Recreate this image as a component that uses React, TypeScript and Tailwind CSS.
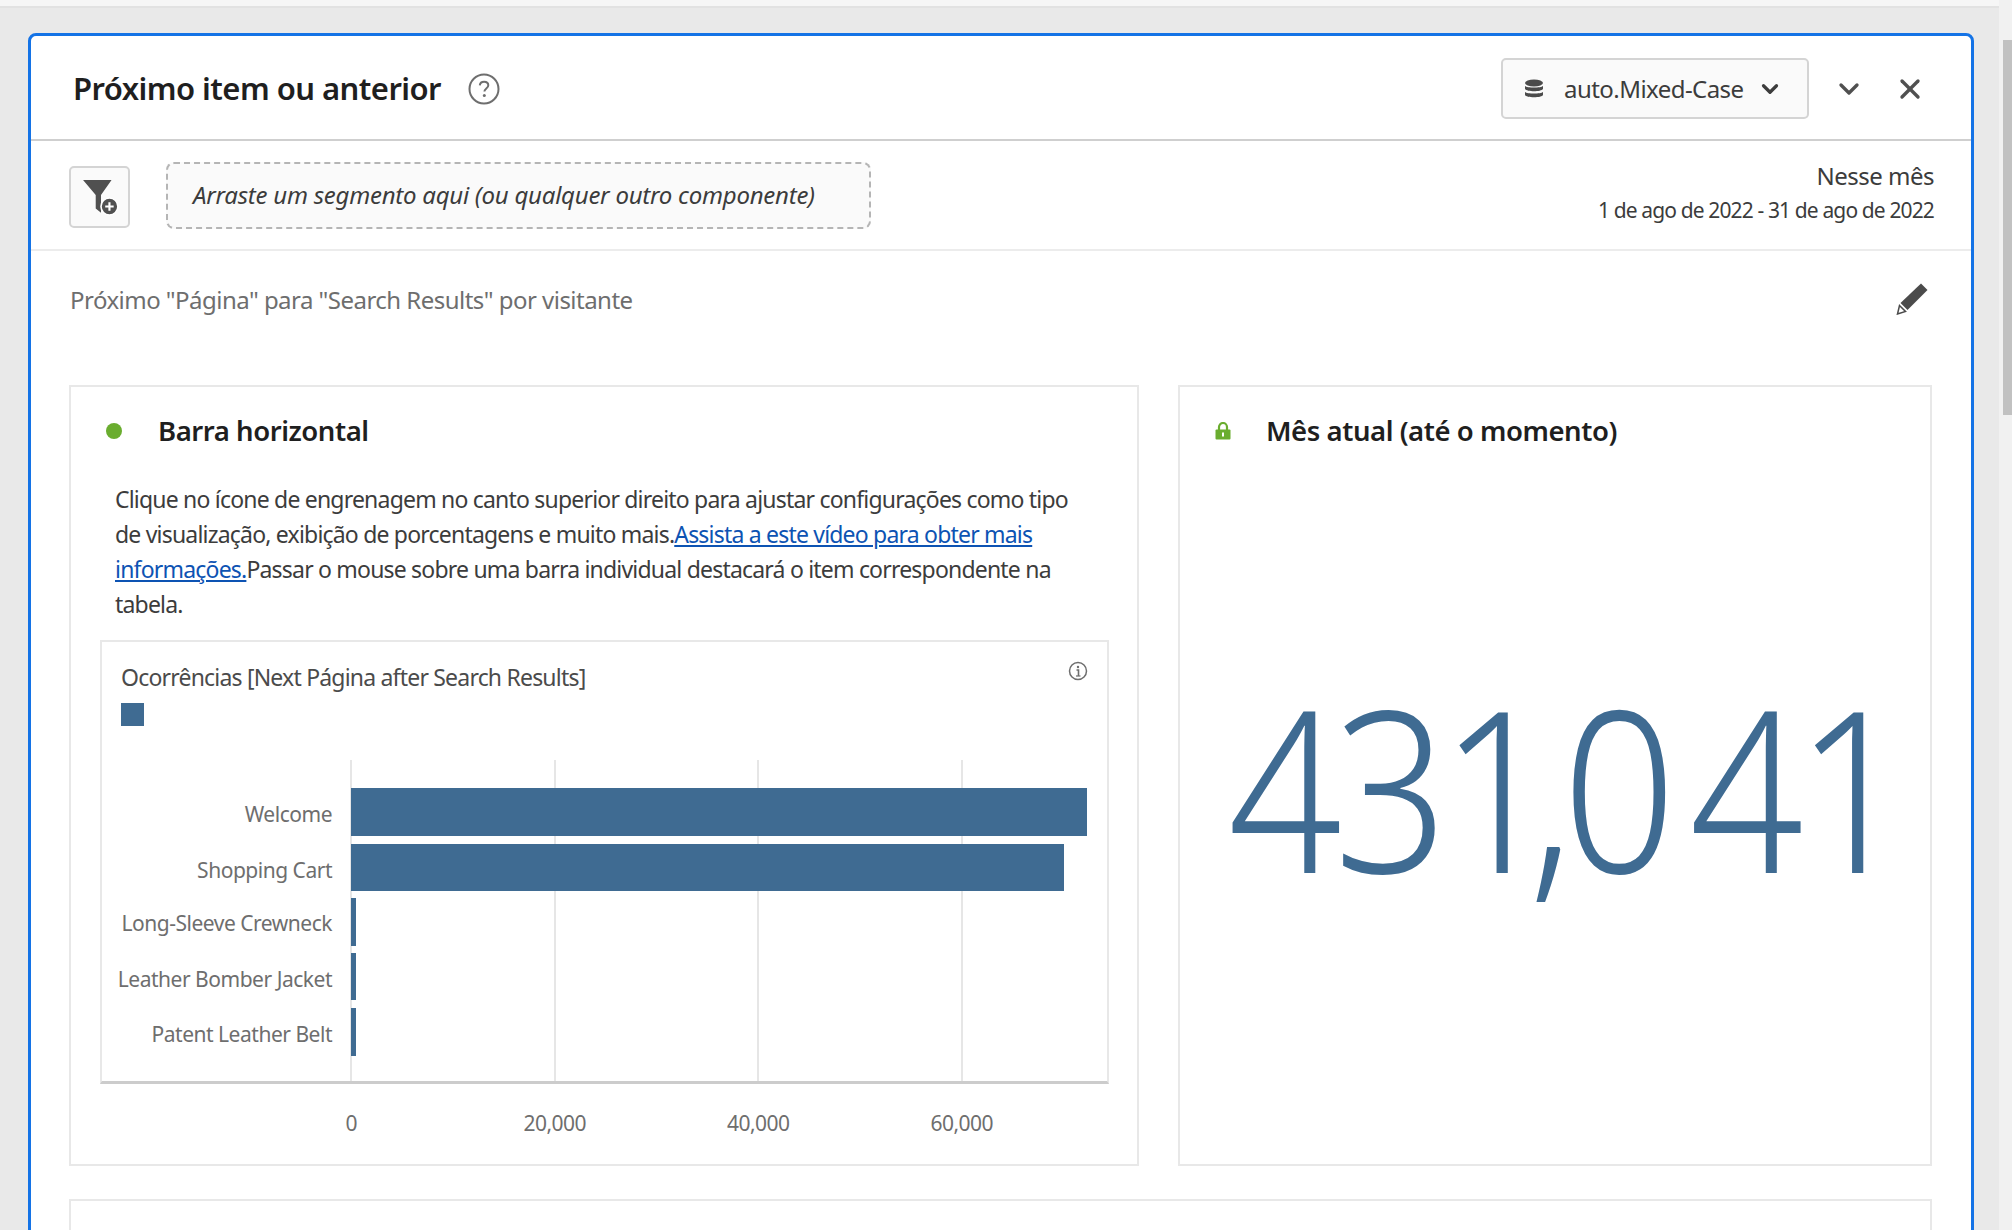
import { ChevronDown, X } from "lucide-react";

const bars = [
  { label: "Welcome", y: 28, h: 48, w: 736, ty: 54 },
  { label: "Shopping Cart", y: 84, h: 47, w: 713, ty: 110 },
  { label: "Long-Sleeve Crewneck", y: 138, h: 48, w: 5, ty: 163 },
  { label: "Leather Bomber Jacket", y: 193, h: 47, w: 5, ty: 219 },
  { label: "Patent Leather Belt", y: 248, h: 48, w: 5, ty: 274 },
];

const gridX = [249, 453, 656, 860];
const ticks = ["0", "20,000", "40,000", "60,000"];

const FilterAdd = () => (
  <svg width="38" height="38" viewBox="0 0 36 36">
    <path d="M1 2h27L18 16v17l-5-4V16z" fill="#505050" />
    <circle cx="26" cy="27" r="8" fill="#505050" stroke="#fff" strokeWidth="1.5" />
    <path d="M26 23v8M22 27h8" stroke="#fff" strokeWidth="2" />
  </svg>
);

const DbIcon = () => (
  <svg width="20" height="20" viewBox="0 0 20 20" fill="#4b4b4b">
    <ellipse cx="10" cy="4" rx="9" ry="3.5" />
    <path d="M1 7c2 2 16 2 18 0v3c-2 3-16 3-18 0z" />
    <path d="M1 13c2 2 16 2 18 0v3c-1 3-17 3-18 0z" />
  </svg>
);

const Pencil = () => (
  <svg width="32" height="32" viewBox="0 0 32 32" fill="#4b4b4b">
    <path d="M25 .5L31.500 7 11.500 27 4.500 20z" />
    <path d="M3.500 22.500l6 6L1.500 31z" fill="none" stroke="#4b4b4b" strokeWidth="1.5" />
  </svg>
);

const LockIcon = () => (
  <svg width="16" height="18" viewBox="0 0 16 18">
    <path d="M4 8V5a4 4 0 0 1 8 0v3" fill="none" stroke="#6aad2f" strokeWidth="2.2" />
    <rect x="0.5" y="7.5" width="15" height="10" rx="1" fill="#6aad2f" />
    <rect x="7" y="10.5" width="2" height="4" fill="#fff" />
  </svg>
);

const HelpIcon = () => (
  <svg width="32" height="32" viewBox="0 0 32 32" fill="none">
    <circle cx="16" cy="16" r="14.5" stroke="#6e6e6e" strokeWidth="2" />
    <path d="M11.800 12.400c.3-2.400 2-3.600 4.300-3.600 2.500 0 4.200 1.400 4.200 3.500 0 3.200-3.900 3.200-3.900 6.300" stroke="#6e6e6e" strokeWidth="2" />
    <circle cx="16.300" cy="22.600" r="1.500" fill="#6e6e6e" />
  </svg>
);

const InfoIcon = () => (
  <svg width="20" height="20" viewBox="0 0 20 20" fill="none">
    <circle cx="10" cy="10" r="8.500" stroke="#6e6e6e" strokeWidth="1.500" />
    <circle cx="10" cy="6" r="1.200" fill="#6e6e6e" />
    <path d="M8.500 9h2v6" stroke="#6e6e6e" strokeWidth="1.600" />
    <path d="M8 15h4.500" stroke="#6e6e6e" strokeWidth="1.200" />
  </svg>
);

const App = () => {
  return (
    <div className="flex h-[1230px] w-full overflow-hidden bg-[#e9e9e9] font-['Noto_Sans',sans-serif] text-[#2c2c2c]">
      <div className="flex min-w-0 flex-1 flex-col">
        <div className="h-[8px] shrink-0 border-b-2 border-[#e2e2e2] bg-[#f6f6f6]" />
        <div className="min-h-0 flex-1 pl-[28px] pr-[25px] pt-[25px]">
          {/* panel */}
          <div className="flex h-[1300px] w-[1946px] flex-col rounded-t-[8px] border-[3px] border-[#1473e6] bg-white">
            {/* header */}
            <div className="flex h-[105px] shrink-0 items-center border-b-2 border-[#cfcfcf] pl-[42px] pr-[45px] pt-[2px]">
              <h1 className="text-[31px] font-semibold tracking-[-0.55px] text-[#1f1f1f]">Próximo item ou anterior</h1>
              <span className="ml-[27px] flex"><HelpIcon /></span>
              <div className="ml-auto flex h-[61px] w-[308px] items-center rounded-[5px] border-2 border-[#d4d4d4] bg-[#fafafa] pl-[21px]">
                <DbIcon />
                <span className="ml-[20px] text-[24px] tracking-[-0.55px] text-[#3c3c3c]">auto.Mixed-Case</span>
                <ChevronDown size={26} strokeWidth={3} className="ml-[13px] text-[#3c3c3c]" />
              </div>
              <ChevronDown size={32} strokeWidth={2.5} className="ml-[24px] text-[#505050]" />
              <X size={32} strokeWidth={2.5} className="ml-[29px] text-[#505050]" />
            </div>
            {/* toolbar */}
            <div className="flex h-[110px] shrink-0 items-center border-b-2 border-[#ececec] pl-[38px] pr-[37px]">
              <div className="mt-[3px] flex h-[62px] w-[61px] items-center justify-center rounded-[5px] border-2 border-[#d4d4d4] bg-[#fafafa] pl-[2px]">
                <FilterAdd />
              </div>
              <div className="ml-[36px] flex h-[67px] w-[705px] items-center rounded-[8px] border-2 border-dashed border-[#b5b5b5] bg-[#fafafa] pl-[25px]">
                <span className="text-[24px] italic tracking-[-0.25px] text-[#3c3c3c]">Arraste um segmento aqui (ou qualquer outro componente)</span>
              </div>
              <div className="ml-auto pb-[5px] text-right">
                <div className="text-[24px] leading-[34px] tracking-[-0.5px] text-[#3c3c3c]">Nesse mês</div>
                <div className="text-[21px] leading-[34px] tracking-[-0.87px] text-[#3c3c3c]">1 de ago de 2022 - 31 de ago de 2022</div>
              </div>
            </div>
            {/* subtitle */}
            <div className="flex h-[134px] shrink-0 items-start pl-[39px] pr-[43px] pt-[31px]">
              <span className="text-[24px] leading-[36px] tracking-[-0.53px] text-[#6e6e6e]">Próximo "Página" para "Search Results" por visitante</span>
              <span className="ml-auto flex pt-[1px]"><Pencil /></span>
            </div>
            {/* cards */}
            <div className="flex shrink-0 gap-[39px] pl-[38px]">
              <div className="h-[781px] w-[1070px] border-2 border-[#e8e8e8] pl-[35px] pt-[24px]">
                <div className="flex h-[40px] items-center">
                  <span className="h-[16px] w-[16px] rounded-full bg-[#6aad2f]" />
                  <h2 className="ml-[36px] text-[27.5px] font-semibold tracking-[-0.45px] text-[#1f1f1f]">Barra horizontal</h2>
                </div>
                <p className="ml-[9px] mt-[31px] w-[965px] text-[23px] leading-[35px] tracking-[-0.8px] text-[#3c3c3c]">
                  Clique no ícone de engrenagem no canto superior direito para ajustar configurações como tipo de visualização, exibição de porcentagens e muito mais.
                  <a href="#" className="text-[#0d53b3] underline">Assista a este vídeo para obter mais informações.</a>
                  Passar o mouse sobre uma barra individual destacará o item correspondente na tabela.
                </p>
                <div className="ml-[-6px] mt-[18px] w-[1009px]">
                  <div className="relative border-x-2 border-b-[3px] border-t-2 border-x-[#e8e8e8] border-b-[#cccccc] border-t-[#e8e8e8] pl-[19px] pt-[18px]">
                    <div className="text-[23px] leading-[34px] tracking-[-0.8px] text-[#4b4b4b]">Ocorrências [Next Página after Search Results]</div>
                    <div className="mt-[9px] h-[23px] w-[23px] bg-[#3f6b92]" />
                    <span className="absolute right-[19px] top-[19px] flex"><InfoIcon /></span>
                    <svg width="1005" height="321" className="ml-[-19px] mt-[34px] block">
                      {gridX.map((x) => (
                        <line key={x} x1={x} x2={x} y1={0} y2={321} stroke="#e6e6e6" strokeWidth="2" />
                      ))}
                      {bars.map((b) => (
                        <g key={b.label}>
                          <rect x={249} y={b.y} width={b.w} height={b.h} fill="#3f6b92" />
                          <text x={230} y={b.ty + 8} textAnchor="end" fontSize="21" letterSpacing="-0.48" fill="#6e6e6e">{b.label}</text>
                        </g>
                      ))}
                    </svg>
                  </div>
                  <div className="flex pl-[149.5px] pt-[22px]">
                    {ticks.map((t) => (
                      <span key={t} className="w-[203.5px] text-center text-[21px] leading-[34px] tracking-[-0.55px] text-[#6e6e6e]">{t}</span>
                    ))}
                  </div>
                </div>
              </div>
              <div className="h-[781px] w-[754px] border-2 border-[#e8e8e8] pl-[35px] pt-[24px]">
                <div className="flex h-[40px] items-center">
                  <LockIcon />
                  <h2 className="ml-[35px] text-[27.5px] font-semibold tracking-[-0.45px] text-[#1f1f1f]">Mês atual (até o momento)</h2>
                </div>
                <div className="ml-[13px] mt-[185px] origin-left scale-x-[0.888] whitespace-nowrap text-[225px] font-light leading-[300px] tracking-[-9px] text-[#3f6b92]">
                  431<span className="ml-[-20px]">,</span><span className="ml-[-4px]">0</span><span className="ml-[24px]">41</span>
                </div>
              </div>
            </div>
            <div className="ml-[38px] mt-[33px] h-[200px] w-[1863px] border-2 border-[#e8e8e8]" />
          </div>
        </div>
      </div>
      {/* scrollbar */}
      <div className="flex w-[13px] shrink-0 flex-col bg-[#f1f1f1] pt-[40px]">
        <div className="ml-[4px] h-[375px] w-[9px] bg-[#c1c1c1]" />
      </div>
    </div>
  );
};

export default App;
